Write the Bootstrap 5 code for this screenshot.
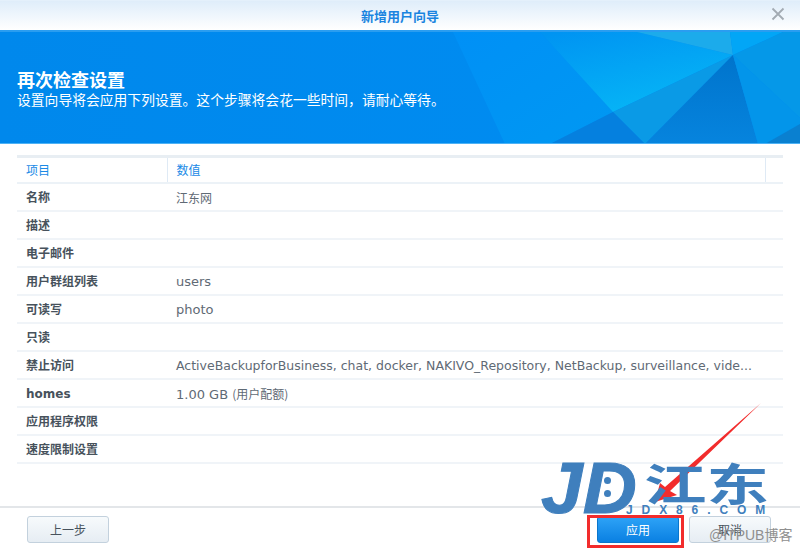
<!DOCTYPE html>
<html lang="zh">
<head>
<meta charset="utf-8">
<title>新增用户向导</title>
<link href="https://cdn.jsdelivr.net/npm/bootstrap@5.3.0/dist/css/bootstrap.min.css" rel="stylesheet">
<style>
html,body{width:800px;height:550px;overflow:hidden;background:#fff}
body{font-family:"Noto Sans CJK SC",sans-serif;font-size:12px;color:#505a64;position:relative}
.wiz{height:550px}
.titlebar{height:32px;background:linear-gradient(#dfedfa,#fff);border-bottom:2px solid #2a9df0;border-top:1px solid #e4f0fb;color:#1a84e0;font-size:13px;font-weight:700;position:relative}
.closex{position:absolute;right:15px;top:6px;width:14px;height:14px}
.hero{height:112px;background:linear-gradient(90deg,#0088ec,#008df2);color:#fff;position:relative;overflow:hidden;padding:36px 17px 0;border-bottom:1px solid #4db2f5}
.hero svg{position:absolute;left:0;top:0}
.hero h1{font-size:18px;font-weight:700;line-height:22px;margin:0;position:relative}
.hero p{font-size:13.8px;line-height:17px;margin:1px 0 0;position:relative}
.tblwrap{padding:11px 17px 0;height:362px}
.sumtbl{width:766px;table-layout:fixed;margin:0;border-top:3px solid #e8eef3}
.sumtbl th,.sumtbl td{height:28px;padding:3px 12px 0 9px;border-bottom:2px solid #f0f4f8;vertical-align:middle;font:400 13px/20px "DejaVu Sans","Noto Sans CJK SC",sans-serif;white-space:nowrap;overflow:hidden;background:transparent;box-shadow:none;color:#5f6a75}
.sumtbl thead th{height:26px;color:#1a8ae6;border-bottom:2px solid #ecf2f7;font-size:12px}
.sumtbl thead th+th{border-left:1px solid #dfeaf5}
.sumtbl tbody td:first-child{font-weight:700;font-size:12px;color:#47525c}
.sumtbl .cjkv{font-family:"Noto Sans CJK SC",sans-serif;font-size:12px}
.sumtbl td.longval{font-size:12.5px}
.c1{width:150px}.c3{width:18px}
.foot{border-top:2px solid #e3e6e9;padding:8px 29px 0 27px}
.wbtn{width:82px;height:27px;border-radius:3px;font-size:12px;padding:0;line-height:25px;color:#47525c;background:linear-gradient(#f7fafc,#e6edf3);border:1px solid #c3d1dd}
.wbtn-go{color:#fff;background:linear-gradient(#2ea3f7,#0a80e2);border-color:#0a76cc}
.wbtn-gap{margin-left:10px}
.redbox{position:absolute;left:587px;top:515px;width:97px;height:33px;border:3px solid #f22c2c;pointer-events:none}
.arrow{position:absolute;left:640px;top:400px}
.jdlogo{position:absolute;left:541px;top:458px;width:240px;height:70px;color:#3f7fbd}
.jdmark{position:absolute;left:0;top:-6px;font:italic 700 72px/72px "Liberation Sans",sans-serif;-webkit-text-stroke:1px #3f7fbd;transform:scaleX(1.04);transform-origin:left center}
.jddot{position:absolute;left:63px;width:7px;height:7px;border-radius:50%;background:#3f7fbd}
.jddot-a{top:19px}.jddot-b{top:32px}
.jdcn{position:absolute;left:103px;top:2px;font:700 44px/44px "Noto Sans CJK SC",sans-serif;transform:scaleX(1.42);transform-origin:left center}
.jdurl{position:absolute;left:85px;top:44px;font:700 12px/16px "Liberation Sans",sans-serif;letter-spacing:8.9px}
.wm{position:absolute;left:709px;top:526px;font:14px/18px "Liberation Sans","Noto Sans CJK SC",sans-serif;color:#8f8f8f}
</style>
</head>
<body>
<div class="wiz d-flex flex-column">
  <div class="titlebar d-flex align-items-center justify-content-center">新增用户向导
    <svg class="closex" viewBox="0 0 14 14"><path d="M1.5 1.5L12.5 12.5M12.5 1.5L1.5 12.5" stroke="#a3abb3" stroke-width="1.8" fill="none"/></svg>
  </div>
  <div class="hero">
    <svg width="800" height="112" viewBox="0 0 800 112">
      <defs>
        <linearGradient id="g1" x1="0.1" y1="0" x2="0.6" y2="1"><stop offset="0" stop-color="#0094f2"/><stop offset="1" stop-color="#06b6f6"/></linearGradient>
        <linearGradient id="g2" x1="0.5" y1="0" x2="0.5" y2="1"><stop offset="0" stop-color="#0074cc"/><stop offset="1" stop-color="#0684de"/></linearGradient>
        <linearGradient id="g3" x1="0" y1="0" x2="1" y2="1"><stop offset="0" stop-color="#0090f6"/><stop offset="1" stop-color="#0098f2"/></linearGradient>
      </defs>
      <polygon points="453,0 540,0 613,80 550,112 505,112" fill="url(#g3)"/>
      <polygon points="540,0 637,0 733,23 613,80" fill="url(#g1)"/>
      <polygon points="637,0 730,0 733,23" fill="#1cabeb"/>
      <polygon points="730,0 783,0 733,23" fill="#02a6f6"/>
      <polygon points="783,0 800,0 800,86 733,23" fill="#0598e8"/>
      <polygon points="613,80 733,23 645,112" fill="#0a9ae6"/>
      <polygon points="733,23 645,112 758,112" fill="url(#g2)"/>
      <polygon points="733,23 758,112 765,112 800,92 800,86" fill="#0395ea"/>
      <polygon points="765,112 800,92 800,112" fill="#0a80d0"/>
      <polygon points="613,80 550,112 645,112" fill="#0580df"/>
    </svg>
    <h1>再次检查设置</h1>
    <p>设置向导将会应用下列设置。这个步骤将会花一些时间，请耐心等待。</p>
  </div>
  <div class="tblwrap">
    <table class="table sumtbl">
      <colgroup><col class="c1"><col><col class="c3"></colgroup>
      <thead><tr><th>项目</th><th>数值</th><th></th></tr></thead>
      <tbody>
        <tr><td>名称</td><td colspan="2"><span class="cjkv">江东网</span></td></tr>
        <tr><td>描述</td><td colspan="2"></td></tr>
        <tr><td>电子邮件</td><td colspan="2"></td></tr>
        <tr><td>用户群组列表</td><td colspan="2">users</td></tr>
        <tr><td>可读写</td><td colspan="2">photo</td></tr>
        <tr><td>只读</td><td colspan="2"></td></tr>
        <tr><td>禁止访问</td><td colspan="2" class="longval">ActiveBackupforBusiness, chat, docker, NAKIVO_Repository, NetBackup, surveillance, vide...</td></tr>
        <tr><td>homes</td><td colspan="2">1.00 GB <span class="cjkv">(用户配额)</span></td></tr>
        <tr><td>应用程序权限</td><td colspan="2"></td></tr>
        <tr><td>速度限制设置</td><td colspan="2"></td></tr>
      </tbody>
    </table>
  </div>
  <div class="foot d-flex">
    <button type="button" class="btn wbtn">上一步</button>
    <button type="button" class="btn wbtn wbtn-go ms-auto">应用</button>
    <button type="button" class="btn wbtn wbtn-gap">取消</button>
  </div>
</div>
<svg class="arrow" width="125" height="120" viewBox="0 0 125 120"><polygon points="121,3 30,91 37,95 15,102 20,83 25,87" fill="#f22c2c"/></svg>
<div class="jdlogo">
  <span class="jdmark">JD</span>
  <span class="jddot jddot-a"></span>
  <span class="jddot jddot-b"></span>
  <span class="jdcn">江东</span>
  <span class="jdurl">JDX86.COM</span>
</div>
<div class="redbox"></div>
<div class="wm">@ITPUB博客</div>
</body>
</html>
